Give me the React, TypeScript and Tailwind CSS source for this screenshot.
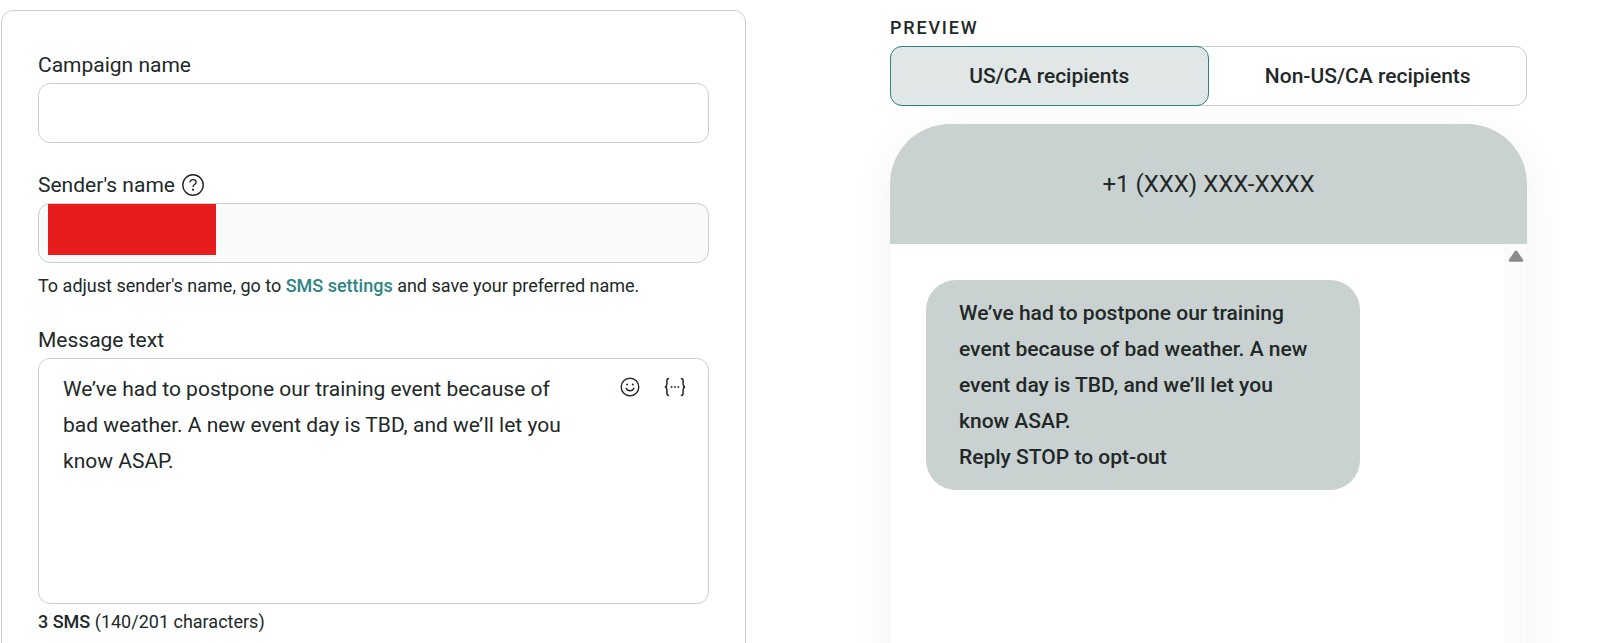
import { useState } from 'react';
import type { ReactNode } from 'react';
import clsx from 'clsx';

const INITIAL_MESSAGE =
  'We’ve had to postpone our training event because of bad weather. A new event day is TBD, and we’ll let you know ASAP.';

const fieldClass = 'block w-full rounded-xl border border-[#c9d1d0] outline-none focus:border-[#2d8583]';

function HelpIcon() {
  return (
    <svg width="24" height="24" viewBox="0 0 24 24" fill="none" stroke="currentColor" strokeWidth="1.4" aria-hidden="true">
      <circle cx="12" cy="12" r="10.2" />
      <path d="M8.9 9.5c0-1.7 1.3-2.9 3.1-2.9s3.1 1.1 3.1 2.7c0 2.2-3.1 2.3-3.1 4.6" />
      <circle cx="12" cy="16.7" r="1.1" fill="currentColor" stroke="none" />
    </svg>
  );
}

function SmileIcon() {
  return (
    <svg width="22" height="22" viewBox="0 0 22 22" fill="none" stroke="currentColor" strokeWidth="1.4" aria-hidden="true">
      <circle cx="11" cy="11" r="8.8" />
      <circle cx="8.2" cy="8.6" r="1" fill="currentColor" stroke="none" />
      <circle cx="13.8" cy="8.6" r="1" fill="currentColor" stroke="none" />
      <path d="M7.2 12.3c.6 1.6 2 2.5 3.8 2.5s3.2-.9 3.8-2.5" strokeLinecap="round" />
    </svg>
  );
}

function VariableIcon() {
  return (
    <svg width="22" height="22" viewBox="0 0 22 22" fill="none" stroke="currentColor" strokeWidth="1.5" aria-hidden="true">
      <path d="M5.2 2.4c-1.7 0-2.3.8-2.3 2.3v3.6c0 1.5-.5 2.4-1.9 2.7 1.4.3 1.9 1.2 1.9 2.7v3.6c0 1.5.6 2.3 2.3 2.3" />
      <path d="M16.8 2.4c1.7 0 2.3.8 2.3 2.3v3.6c0 1.5.5 2.4 1.9 2.7-1.4.3-1.9 1.2-1.9 2.7v3.6c0 1.5-.6 2.3-2.3 2.3" />
      <g fill="currentColor" stroke="none">
        <circle cx="7.6" cy="11" r="0.9" />
        <circle cx="11" cy="11" r="0.9" />
        <circle cx="14.4" cy="11" r="0.9" />
      </g>
    </svg>
  );
}

interface TabProps {
  active: boolean;
  onClick: () => void;
  children: ReactNode;
}

function Tab({ active, onClick, children }: TabProps) {
  return (
    <button
      type="button"
      role="tab"
      aria-selected={active}
      onClick={onClick}
      className={clsx(
        '-my-px h-15 flex-1 rounded-xl border font-medium first:-ml-px last:-mr-px',
        active ? 'border-[#2d8583] bg-[#e1e7e6]' : 'border-transparent'
      )}
    >
      {children}
    </button>
  );
}

export default function App() {
  const [name, setName] = useState('');
  const [message, setMessage] = useState(INITIAL_MESSAGE);
  const [region, setRegion] = useState<'us' | 'other'>('us');

  return (
    <div className="grid h-screen grid-cols-[745fr_637fr] gap-36 overflow-hidden bg-white pt-2.5 pr-[79px] pl-px font-[Roboto,sans-serif] text-[21px] leading-9 text-[#212827]">
      <form className="flex flex-col gap-6 self-start rounded-xl border border-[#c9d1d0] p-9">
        <div>
          <label htmlFor="campaign" className="block">Campaign name</label>
          <input
            id="campaign"
            type="text"
            value={name}
            onChange={e => setName(e.target.value)}
            className={clsx(fieldClass, 'h-15 px-6')}
          />
        </div>

        <div>
          <div className="flex items-center gap-1.5">
            <label htmlFor="sender">Sender's name</label>
            <button type="button" aria-label="About the sender's name">
              <HelpIcon />
            </button>
          </div>
          <div className="relative">
            <input id="sender" type="text" disabled className={clsx(fieldClass, 'h-15 bg-[#f9fbfa] px-6')} />
            <span className="absolute top-px left-2.5 h-[51px] w-42 bg-[#e71d1d]" />
          </div>
          <p className="mt-2.5 text-lg leading-[25px]">
            To adjust sender's name, go to{' '}
            <a href="#sms-settings" className="font-medium text-[#2d8583]">SMS settings</a>{' '}
            and save your preferred name.
          </p>
        </div>

        <div>
          <label htmlFor="message" className="block">Message text</label>
          <div className="relative">
            <textarea
              id="message"
              value={message}
              onChange={e => setMessage(e.target.value)}
              className={clsx(fieldClass, 'h-[246px] resize-none py-3 pr-32 pl-6')}
            />
            <div className="absolute top-[18px] right-[23px] flex gap-[23px]">
              <button type="button" aria-label="Insert emoji">
                <SmileIcon />
              </button>
              <button type="button" aria-label="Insert variable">
                <VariableIcon />
              </button>
            </div>
          </div>
          <p className="mt-[5px] text-lg leading-[25px]">
            <strong className="font-medium">3 SMS</strong> (140/201 characters)
          </p>
        </div>
      </form>

      <section>
        <h2 className="text-lg leading-9 font-medium tracking-widest">PREVIEW</h2>
        <div role="tablist" className="flex rounded-xl border border-[#c9d1d0]">
          <Tab active={region === 'us'} onClick={() => setRegion('us')}>US/CA recipients</Tab>
          <Tab active={region === 'other'} onClick={() => setRegion('other')}>Non-US/CA recipients</Tab>
        </div>

        <div className="mt-[18px] rounded-t-[60px] bg-white shadow-[0_12px_45px_rgba(0,0,0,0.06)]">
          <div className="flex h-30 items-center justify-center rounded-t-[60px] bg-[#cad2d1] text-2xl">
            +1 (XXX) XXX-XXXX
          </div>
          <div className="flex min-h-[480px]">
            <div className="flex-1 p-9">
              <div className="w-4/5 rounded-[30px] bg-[#cad2d1] px-[33px] py-[15px] font-medium">
                <p>{message}</p>
                <p>Reply STOP to opt-out</p>
              </div>
            </div>
            <div className="flex w-[23px] justify-center bg-[#fbfbfb] pt-1.5">
              <svg width="16" height="12" viewBox="0 0 16 12" fill="#8b8b8b" aria-hidden="true">
                <path d="M6.8 1.3a1.5 1.5 0 0 1 2.4 0l5.9 8.4c.6.9.2 2-1 2H1.9c-1.2 0-1.6-1.1-1-2z" />
              </svg>
            </div>
          </div>
        </div>
      </section>
    </div>
  );
}
